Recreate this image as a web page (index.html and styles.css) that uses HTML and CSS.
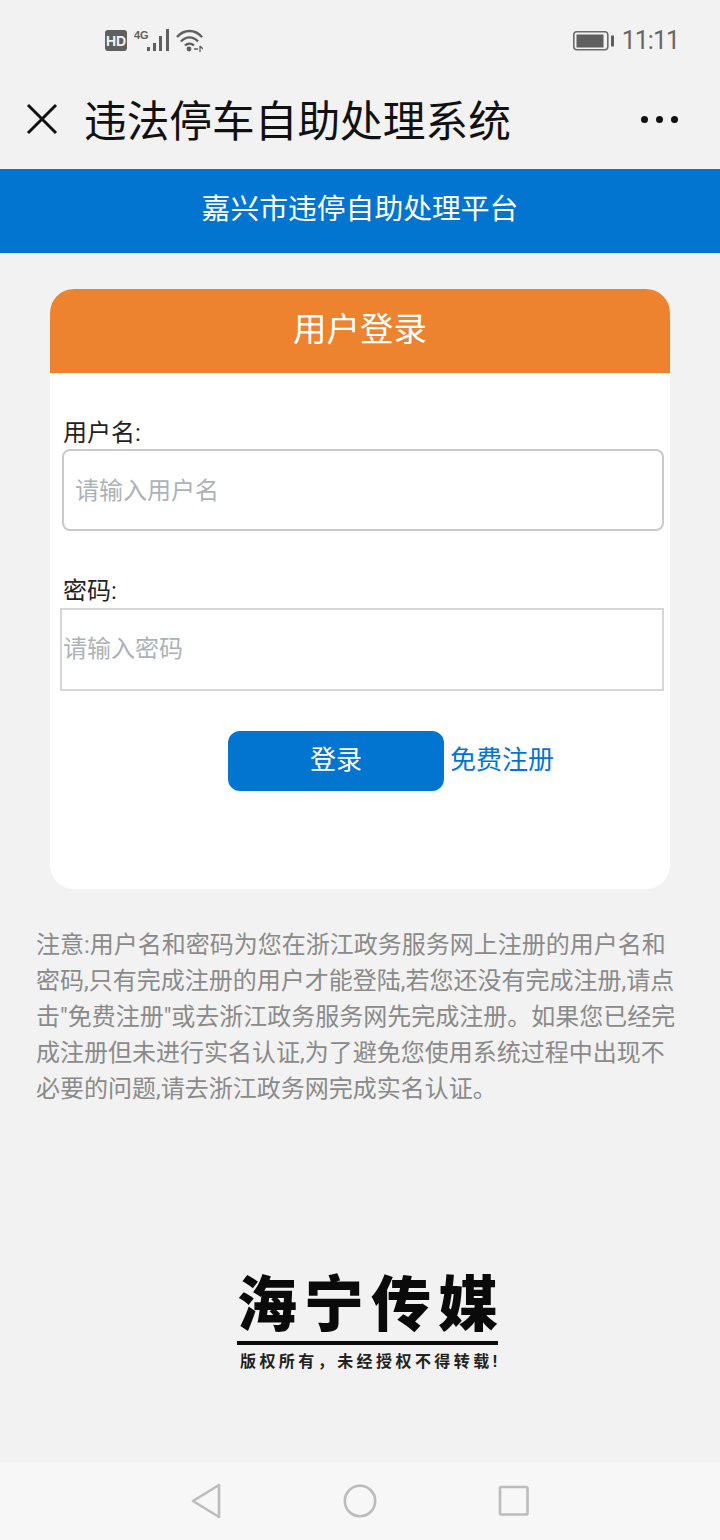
FILE: index.html
```html
<!DOCTYPE html>
<html lang="zh-CN">
<head>
    <meta charset="UTF-8">
    <meta name="viewport" content="width=device-width, initial-scale=1.0">
    <title>违法停车自助处理系统</title>
    <link rel="stylesheet" href="styles.css">
</head>
<body>

<div class="status-bar">
    <div class="status-left">
        <svg width="22" height="22" viewBox="0 0 22 22"><rect x="0" y="0" width="22" height="21" rx="3" fill="#5f5f5f"/><text x="11" y="15.5" text-anchor="middle" class="hd-text">HD</text></svg>
        <svg width="35" height="24" viewBox="0 0 35 24">
            <text x="0" y="10" class="net-text">4G</text>
            <rect x="13" y="18" width="3" height="4" fill="#5f5f5f"/>
            <rect x="19" y="14" width="3" height="8" fill="#5f5f5f"/>
            <rect x="25" y="7" width="3" height="15" fill="#5f5f5f"/>
            <rect x="32" y="0" width="3" height="22" fill="#5f5f5f"/>
        </svg>
        <svg width="27" height="24" viewBox="0 0 27 24" fill="none" stroke="#5f5f5f" stroke-width="2.4">
            <path d="M1 8C8 0 19 0 26 8"/>
            <path d="M5 12.5C10 7 17 7 22 12.5"/>
            <path d="M9 16.5C11.500 14 15.500 14 18 16.500"/>
            <circle cx="13" cy="20" r="2.400" fill="#5f5f5f" stroke="none"/>
            <path d="M18 20h4M24 17v6M24 17l3 3" stroke-width="1.300"/>
        </svg>
    </div>
    <div class="status-right">
        <svg width="41" height="20" viewBox="0 0 41 20"><rect x="0.800" y="0.800" width="34" height="18" rx="3" fill="none" stroke="#6a6a6a" stroke-width="1.600"/><rect x="3.500" y="3.500" width="27" height="13" fill="#5f5f5f"/><rect x="38" y="4.500" width="3" height="11" fill="#5f5f5f"/></svg>
        <span class="clock">11:11</span>
    </div>
</div>

<div class="title-bar">
    <svg class="close-icon" width="32" height="32" viewBox="0 0 32 32" stroke="#111" stroke-width="3" fill="none"><path d="M2 2L30 30M30 2L2 30"/></svg>
    <h1>违法停车自助处理系统</h1>
    <div class="more"><i></i><i></i><i></i></div>
</div>

<div class="banner">嘉兴市违停自助处理平台</div>

<div class="login-card">
    <div class="card-head">用户登录</div>
    <div class="card-body">
        <label class="field-label" for="username">用户名:</label>
        <input class="input-name" id="username" type="text" placeholder="请输入用户名">
        <label class="field-label label-pass" for="password">密码:</label>
        <input class="input-pass" id="password" type="text" placeholder="请输入密码">
        <div class="actions">
            <button class="btn-login">登录</button>
            <a class="link-register" href="#">免费注册</a>
        </div>
    </div>
</div>

<p class="notice">注意:用户名和密码为您在浙江政务服务网上注册的用户名和密码,只有完成注册的用户才能登陆,若您还没有完成注册,请点击"免费注册"或去浙江政务服务网先完成注册。如果您已经完成注册但未进行实名认证,为了避免您使用系统过程中出现不必要的问题,请去浙江政务网完成实名认证。</p>

<div class="watermark">
    <div class="wm-title">海宁传媒</div>
    <div class="wm-sub">版权所有，未经授权不得转载!</div>
</div>

<div class="nav-bar">
    <svg width="32" height="36" viewBox="0 0 32 36" fill="none" stroke="#bcbcbc" stroke-width="2.600" stroke-linejoin="round"><path d="M29 2V34L3 18Z"/></svg>
    <svg width="34" height="34" viewBox="0 0 34 34" fill="none" stroke="#bcbcbc" stroke-width="2.600"><circle cx="17" cy="17" r="15.200"/></svg>
    <svg width="32" height="32" viewBox="0 0 32 32" fill="none" stroke="#bcbcbc" stroke-width="2.600" stroke-linejoin="round"><rect x="2" y="2" width="27.500" height="27.500" rx="1"/></svg>
</div>

</body>
</html>
```

FILE: styles.css
```css
* {
    box-sizing: border-box;
}
body {
    font-family: Roboto, "Noto Sans CJK SC", sans-serif;
    background-color: #f2f2f2;
    margin: 0;
    padding: 0;
    height: 1540px;
    overflow: hidden;
    display: flex;
    flex-direction: column;
}
.status-bar {
    height: 80px;
    padding: 1px 41px 0 105px;
    display: flex;
    justify-content: space-between;
    align-items: center;
}
.status-left {
    display: flex;
    align-items: center;
    gap: 7px;
}
.hd-text {
    font-family: "Liberation Sans", sans-serif;
    font-size: 14px;
    font-weight: 700;
    fill: #f2f2f2;
}
.net-text {
    font-family: "Liberation Sans", sans-serif;
    font-size: 11px;
    font-weight: 700;
    fill: #5f5f5f;
}
.status-right {
    display: flex;
    align-items: center;
    gap: 8px;
}
.clock {
    font-family: Roboto, sans-serif;
    font-size: 25px;
    color: #666;
    letter-spacing: -1px;
}
.title-bar {
    height: 89px;
    padding: 0 42px 12px 26px;
    display: flex;
    align-items: center;
}
.title-bar h1 {
    margin: 0 0 2px 26px;
    font-size: 42.7px;
    font-weight: 400;
    color: #111;
    flex: 1;
}
.more {
    display: flex;
    gap: 8px;
    padding-top: 2px;
}
.more i {
    width: 7px;
    height: 7px;
    border-radius: 50%;
    background-color: #111;
}
.banner {
    height: 84px;
    background-color: #0275d1;
    color: white;
    font-size: 28.8px;
    line-height: 80px;
    text-align: center;
}
.login-card {
    margin: 36px 50px 0;
    height: 600px;
    background-color: #fff;
    border-radius: 24px;
    overflow: hidden;
}
.card-head {
    height: 84px;
    background-color: #ed822f;
    color: white;
    font-size: 33.5px;
    line-height: 81px;
    text-align: center;
}
.card-body {
    padding: 40px 7px 0 10px;
}
.field-label {
    display: block;
    margin-left: 3px;
    padding-top: 4px;
    font-size: 24px;
    line-height: 32px;
    color: #222;
}
.label-pass {
    margin-top: 41px;
    padding-top: 3px;
    padding-bottom: 1px;
}
input {
    display: block;
    width: 100%;
    font-family: inherit;
    font-size: 24px;
    background-color: #fff;
    outline: none;
}
input::placeholder {
    color: #adb2b8;
}
.input-name {
    margin: 0 0 0 2px;
    width: 602px;
    height: 82px;
    padding: 2px 11px 0;
    border: 2px solid #cacaca;
    border-radius: 8px;
}
.input-pass {
    width: 604px;
    height: 83px;
    padding: 0 1px 1px;
    border: 2px solid #d6d6d6;
    border-radius: 0;
}
.actions {
    margin-top: 40px;
    padding-left: 168px;
    display: flex;
    align-items: center;
    gap: 6px;
}
.btn-login {
    width: 216px;
    height: 60px;
    padding: 0 0 7px;
    background-color: #0275d1;
    color: white;
    border: none;
    border-radius: 12px;
    font-family: inherit;
    font-size: 26px;
}
.link-register {
    padding-bottom: 7px;
    color: #0275d1;
    font-size: 26px;
    text-decoration: none;
}
.notice {
    margin: 38px 40px 0 36px;
    font-size: 24px;
    line-height: 36px;
    color: #8a8a8a;
}
.watermark {
    margin: 169px 0 0 237px;
    width: 261px;
}
.wm-title {
    font-size: 60px;
    line-height: 60px;
    font-weight: 900;
    color: #0a0a0a;
    white-space: nowrap;
    padding-bottom: 5px;
    border-bottom: 4px solid #0a0a0a;
    text-align: justify;
    text-align-last: justify;
}
.wm-sub {
    margin-top: 5px;
    padding: 0 1px 0 3px;
    font-size: 16px;
    line-height: 24px;
    font-weight: 700;
    color: #222;
    white-space: nowrap;
    text-align: justify;
    text-align-last: justify;
}
.nav-bar {
    margin-top: auto;
    height: 78px;
    background-color: #f7f7f7;
    padding: 0 190px;
    display: flex;
    justify-content: space-between;
    align-items: center;
}
```
